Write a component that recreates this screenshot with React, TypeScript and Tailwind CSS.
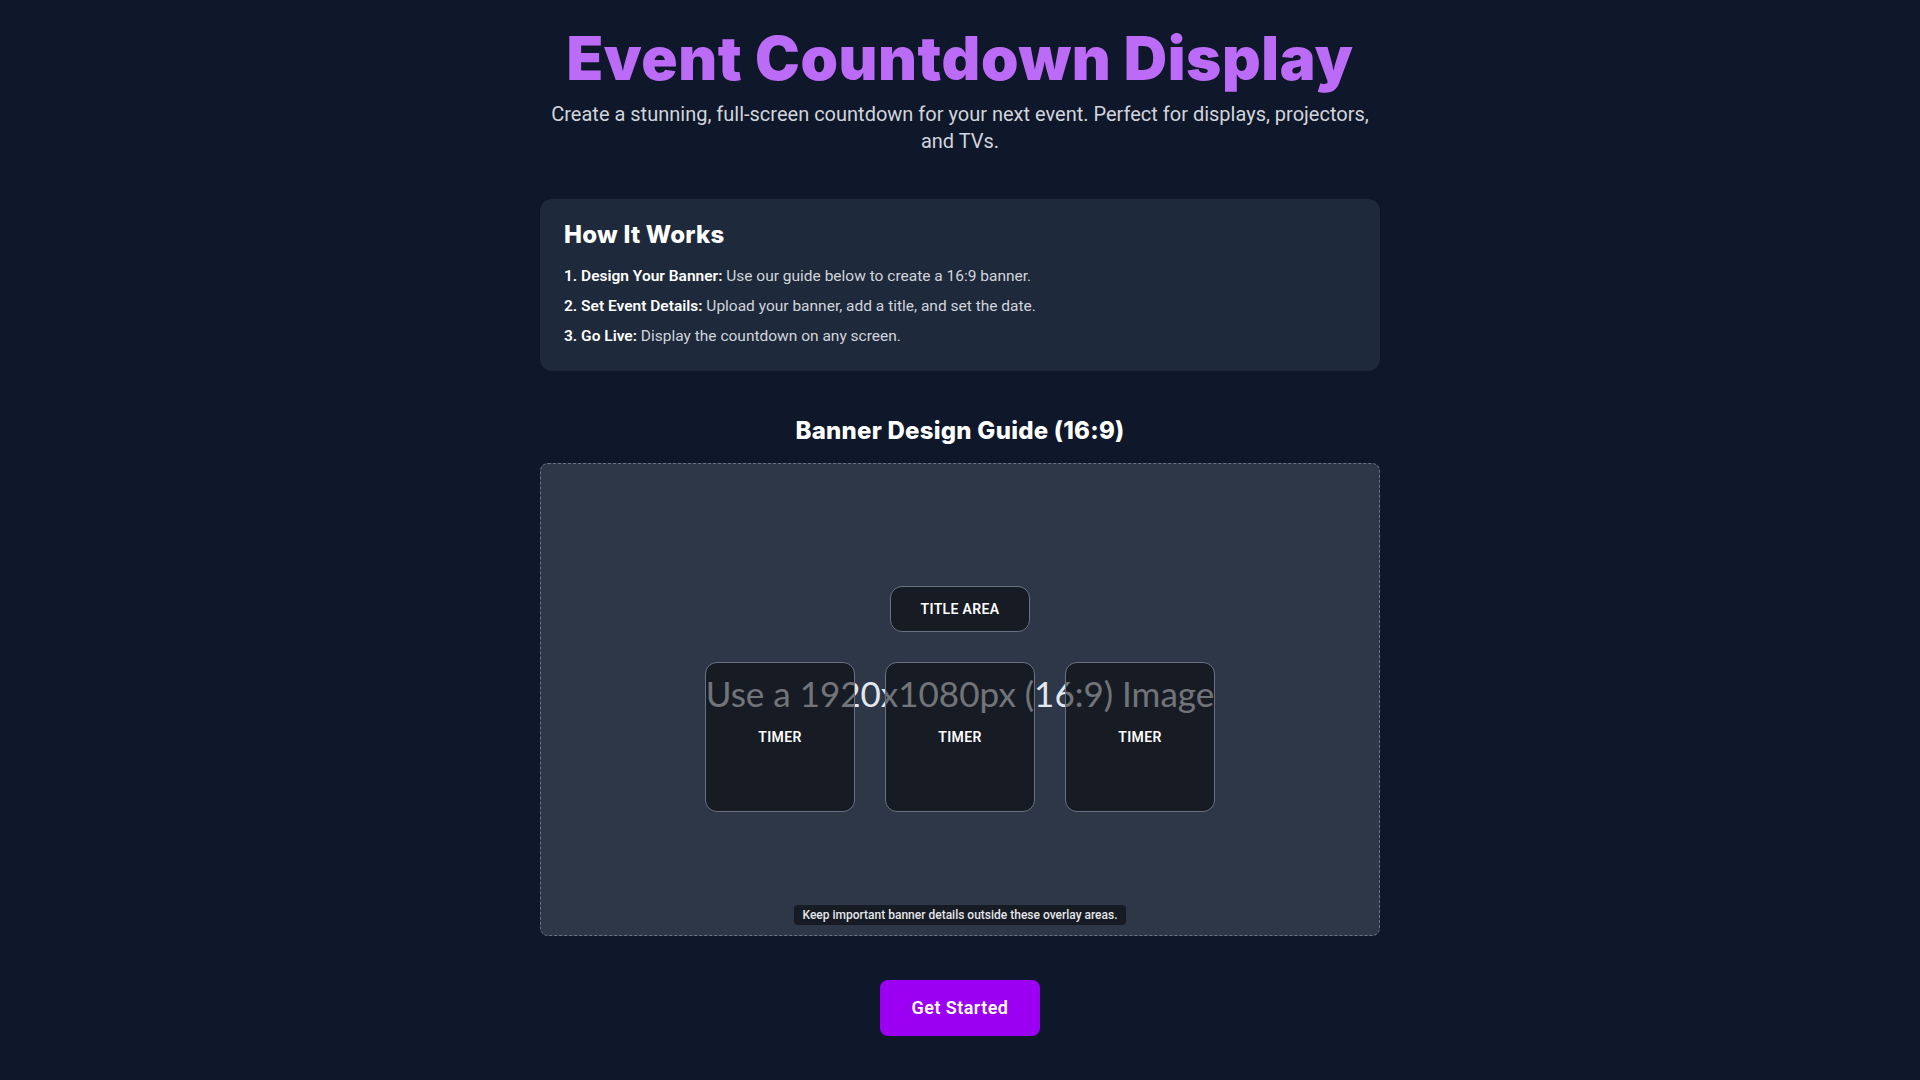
const steps = [
  { label: "1. Design Your Banner:", text: "Use our guide below to create a 16:9 banner." },
  { label: "2. Set Event Details:", text: "Upload your banner, add a title, and set the date." },
  { label: "3. Go Live:", text: "Display the countdown on any screen." },
];

const App = () => {
  return (
    <main className="min-h-screen bg-[#0f172a] text-white font-['Roboto',sans-serif] flex flex-col items-center pt-7 pb-10">
      <h1 className="text-6xl leading-none font-black text-[#bb6bf5] font-['Inter',sans-serif] tracking-[0.01em]">
        Event Countdown Display
      </h1>
      <p className="mt-[13px] w-[840px] text-center text-xl leading-[27px] text-gray-300">
        Create a stunning, full-screen countdown for your next event. Perfect for displays, projectors,
        <br />
        and TVs.
      </p>

      <section className="mt-11 w-[840px] rounded-xl bg-[#1e293b] px-6 pt-5 pb-[23px]">
        <h2 className="text-2xl leading-8 font-extrabold font-['Inter',sans-serif] tracking-[0.01em]">How It Works</h2>
        <ul className="mt-[13px] space-y-1.5 text-[15.5px] leading-6 text-gray-300">
          {steps.map((s) => (
            <li key={s.label}>
              <span className="font-semibold text-white">{s.label}</span> {s.text}
            </li>
          ))}
        </ul>
      </section>

      <h2 className="mt-11 text-2xl leading-8 font-extrabold font-['Inter',sans-serif] tracking-[0.01em]">
        Banner Design Guide (16:9)
      </h2>

      <div className="relative mt-4 w-[840px] aspect-video rounded-lg border border-dashed border-gray-500 bg-[#2d3748] overflow-hidden">
        <div className="absolute inset-0 flex items-center justify-center pb-3">
          <span className="font-['Lato',sans-serif] text-[35px] text-[#e2e8f0]">Use a 1920x1080px (16:9) Image</span>
        </div>
        <div className="relative h-full flex flex-col items-center justify-center gap-[30px]">
          <div className="rounded-xl border border-gray-500 bg-black/50 px-[30px] py-3 text-sm leading-5 font-semibold tracking-wide">
            TITLE AREA
          </div>
          <div className="flex gap-[30px]">
            {["a", "b", "c"].map((k) => (
              <div
                key={k}
                className="w-[150px] h-[150px] rounded-xl border border-gray-500 bg-black/50 flex items-center justify-center text-sm font-semibold tracking-wide"
              >
                TIMER
              </div>
            ))}
          </div>
        </div>
        <div className="absolute bottom-[10px] left-0 right-0 flex justify-center">
          <span className="rounded bg-black/50 px-2 py-0.5 text-xs leading-4 font-medium text-gray-200">
            Keep important banner details outside these overlay areas.
          </span>
        </div>
      </div>

      <button className="mt-11 rounded-lg bg-[#9b00f2] px-8 py-3.5 text-lg leading-7 font-semibold text-white tracking-wide">
        Get Started
      </button>
    </main>
  );
};

export default App;
